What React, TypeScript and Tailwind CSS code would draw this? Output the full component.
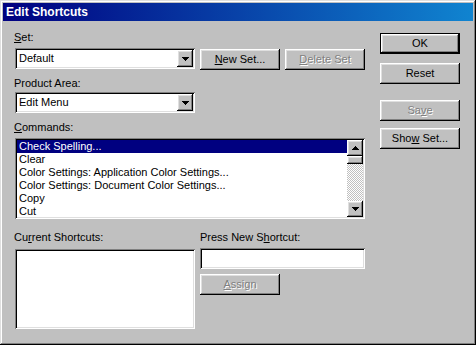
import React from "react";

const RAISED =
  "shadow-[inset_-1px_-1px_0_#000,inset_1px_1px_0_#fff,inset_-2px_-2px_0_#808080,inset_2px_2px_0_#dfdfdf]";
const SUNKEN =
  "shadow-[inset_1px_1px_0_#808080,inset_-1px_-1px_0_#fff,inset_2px_2px_0_#000,inset_-2px_-2px_0_#dfdfdf]";
const DISABLED = "text-[#808080] [text-shadow:1px_1px_0_#fff]";

function U({ children }: { children: React.ReactNode }) {
  return <span className="underline decoration-1 underline-offset-[1px]">{children}</span>;
}

function DownArrow() {
  return (
    <svg width="7" height="4" viewBox="0 0 7 4" shapeRendering="crispEdges">
      <rect x="0" y="0" width="7" height="1" fill="#000" />
      <rect x="1" y="1" width="5" height="1" fill="#000" />
      <rect x="2" y="2" width="3" height="1" fill="#000" />
      <rect x="3" y="3" width="1" height="1" fill="#000" />
    </svg>
  );
}

function UpArrow() {
  return (
    <svg width="7" height="4" viewBox="0 0 7 4" shapeRendering="crispEdges">
      <rect x="3" y="0" width="1" height="1" fill="#000" />
      <rect x="2" y="1" width="3" height="1" fill="#000" />
      <rect x="1" y="2" width="5" height="1" fill="#000" />
      <rect x="0" y="3" width="7" height="1" fill="#000" />
    </svg>
  );
}

function Btn({
  children,
  disabled,
  extra = "",
}: {
  children: React.ReactNode;
  disabled?: boolean;
  extra?: string;
}) {
  return (
    <div
      className={
        "flex h-[21px] w-[80px] shrink-0 items-center justify-center bg-[#c0c0c0] " +
        RAISED +
        " " +
        (disabled ? DISABLED : "text-black") +
        " " +
        extra
      }
    >
      {children}
    </div>
  );
}

function Combo({ text }: { text: string }) {
  return (
    <div className={"flex h-[21px] w-[180px] shrink-0 bg-white p-[2px] " + SUNKEN}>
      <div className="flex-1 pl-[2px] leading-[17px]">{text}</div>
      <div className={"flex h-[17px] w-[16px] items-center justify-center bg-[#c0c0c0] " + RAISED}>
        <DownArrow />
      </div>
    </div>
  );
}

const commands = [
  "Check Spelling...",
  "Clear",
  "Color Settings: Application Color Settings...",
  "Color Settings: Document Color Settings...",
  "Copy",
  "Cut",
];

export default function App() {
  return (
    <div
      className={
        "flex h-[345px] w-[476px] flex-col bg-[#c0c0c0] p-[3px] text-[11px] leading-[13px] text-black font-['Liberation_Sans',Arial,sans-serif] select-none shadow-[inset_-1px_-1px_0_#000,inset_1px_1px_0_#dfdfdf,inset_-2px_-2px_0_#808080,inset_2px_2px_0_#fff]"
      }
    >
      <div className="flex h-[18px] shrink-0 items-center bg-[linear-gradient(to_right,#000080,#1084d0)] pl-[3px] text-[12px] font-bold leading-[18px] text-white">
        Edit Shortcuts
      </div>

      <div className="flex gap-[15px] pl-[12px]">
        {/* Left column */}
        <div className="flex w-[350px] flex-col">
          <div className="-ml-px mt-[10px]">
            <U>S</U>et:
          </div>
          <div className="mt-[4px] flex items-start gap-[5px]">
            <Combo text="Default" />
            <Btn extra="mt-px">
              <span>
                <U>N</U>ew Set...
              </span>
            </Btn>
            <Btn disabled extra="mt-px">
              <span>
                <U>D</U>elete Set
              </span>
            </Btn>
          </div>

          <div className="-ml-px mt-[7px]">Product Area:</div>
          <div className="mt-[2px]">
            <Combo text="Edit Menu" />
          </div>

          <div className="-ml-px mt-[8px]">
            <U>C</U>ommands:
          </div>
          <div className={"mt-[4px] flex h-[81px] w-[350px] bg-white p-[2px] " + SUNKEN}>
            <div className="flex-1 overflow-hidden">
              {commands.map((c, i) => (
                <div
                  key={c}
                  className={
                    "h-[13px] whitespace-nowrap pl-[2px] leading-[13px] " +
                    (i === 0 ? "bg-[#000080] text-white" : "text-black")
                  }
                >
                  {c}
                </div>
              ))}
            </div>
            <div className="flex w-[16px] flex-col">
              <div className={"flex h-[16px] items-center justify-center bg-[#c0c0c0] " + RAISED}>
                <UpArrow />
              </div>
              <div className={"h-[8px] bg-[#c0c0c0] " + RAISED} />
              <div className="flex-1 bg-[repeating-conic-gradient(#c0c0c0_0_25%,#ffffff_0_50%)] bg-[length:2px_2px]" />
              <div className={"flex h-[16px] items-center justify-center bg-[#c0c0c0] " + RAISED}>
                <DownArrow />
              </div>
            </div>
          </div>

          <div className="mt-[12px] flex gap-[5px]">
            <div className="flex w-[180px] flex-col">
              <div className="-ml-px">
                Cu<U>r</U>rent Shortcuts:
              </div>
              <div className={"mt-[5px] h-[80px] w-[180px] bg-white " + SUNKEN} />
            </div>
            <div className="flex w-[165px] flex-col">
              <div>
                Press New S<U>h</U>ortcut:
              </div>
              <div className={"mt-[4px] h-[21px] w-[165px] bg-white " + SUNKEN} />
              <Btn disabled extra="mt-[5px]">
                <span>
                  <U>A</U>ssign
                </span>
              </Btn>
            </div>
          </div>
        </div>

        {/* Right column */}
        <div className="flex w-[80px] flex-col">
          <div className="mt-[12px] h-[21px] w-[80px] border border-black">
            <div className={"flex h-[19px] w-[78px] items-center justify-center bg-[#c0c0c0] " + RAISED}>
              OK
            </div>
          </div>
          <Btn extra="mt-[9px]">Reset</Btn>
          <Btn disabled extra="mt-[16px]">
            <span>
              Sa<U>v</U>e
            </span>
          </Btn>
          <Btn extra="mt-[7px]">
            <span>
              Sho<U>w</U> Set...
            </span>
          </Btn>
        </div>
      </div>
    </div>
  );
}
